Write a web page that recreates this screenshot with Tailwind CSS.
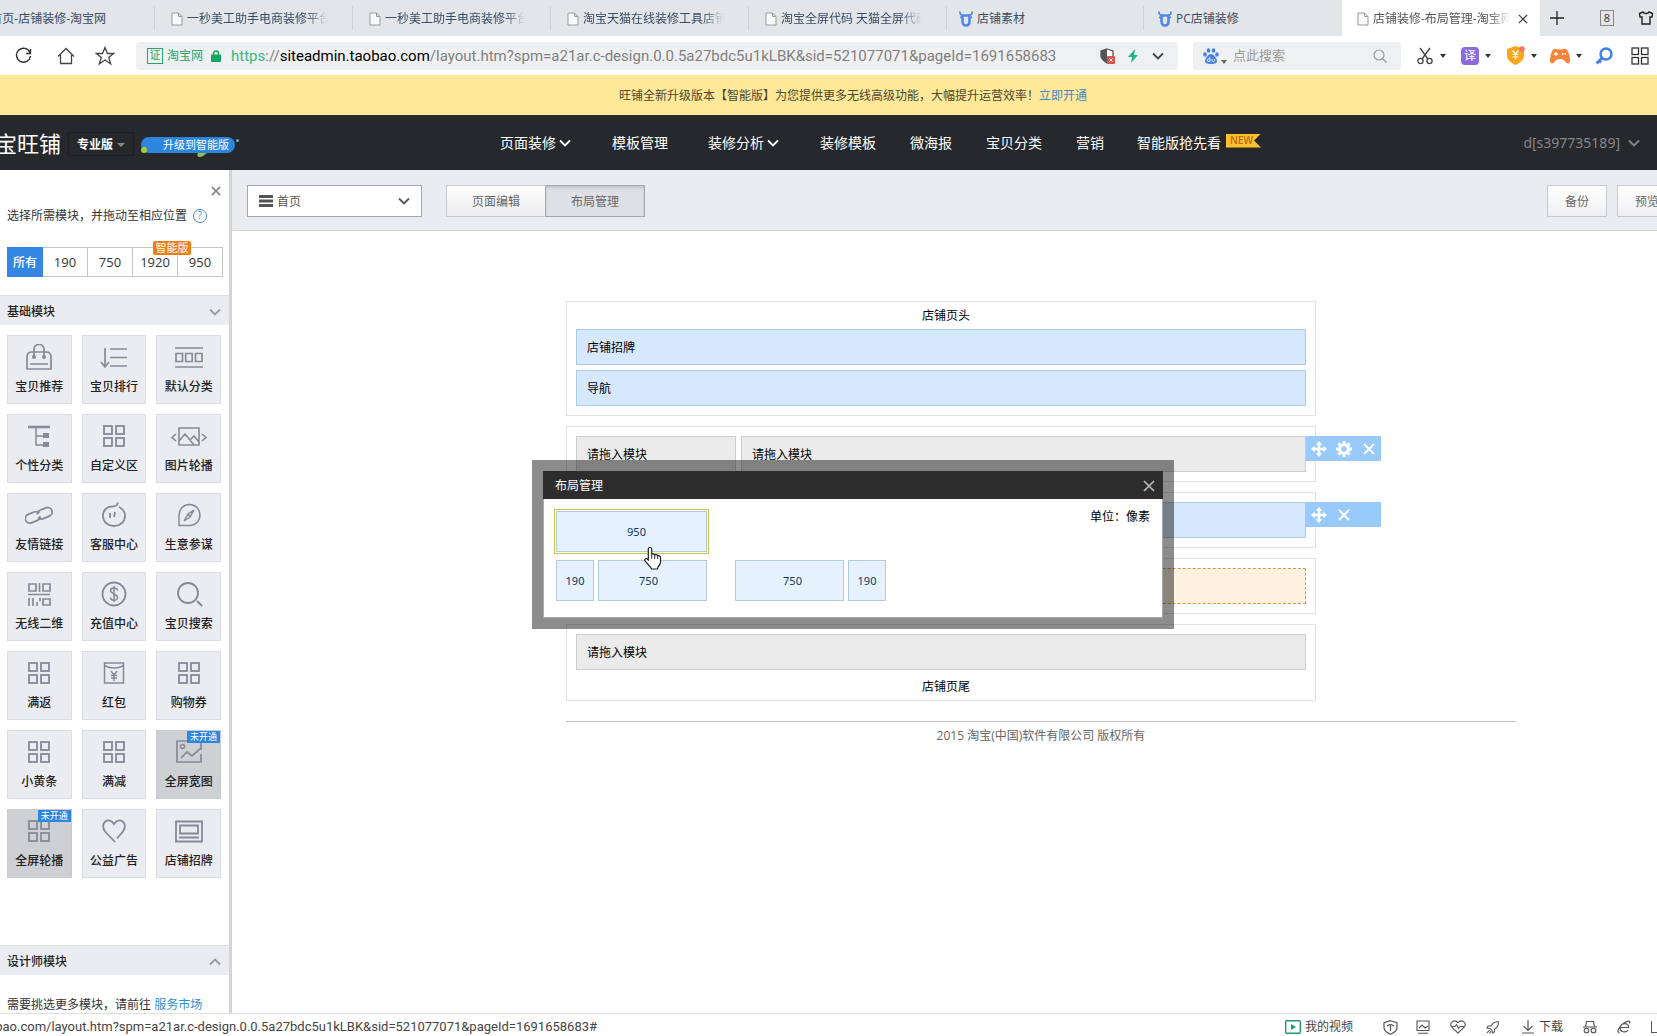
<!DOCTYPE html>
<html lang="zh-CN">
<head>
<meta charset="utf-8">
<title>店铺装修-布局管理-淘宝网</title>
<script src="https://cdn.jsdelivr.net/npm/@tailwindcss/browser@4"></script>
</head>
<body class="flex h-screen min-w-0 flex-col overflow-hidden bg-white font-['Open_Sans','Noto_Sans_CJK_SC',sans-serif] text-xs text-[#333]">

<!-- Shared icon shapes -->
<svg class="hidden" xmlns="http://www.w3.org/2000/svg">
  <symbol id="page" viewBox="0 0 12 14"><path d="M1 1h6.500L11 4.500V13H1zM7.500 1v3.500H11" fill="#fafafa" stroke="#999" /></symbol>
  <symbol id="bull" viewBox="0 0 14 16"><path d="M.8.500C.8 3 1.500 4 3.500 4M13.200.5c0 2.500-.7 3.500-2.700 3.500" fill="none" stroke="#4f86e8" stroke-width="1.600"/><path d="M3.500 4.500h7V10c0 3-1.200 4.500-3.500 4.500S3.500 13 3.500 10z" fill="none" stroke="#4f86e8" stroke-width="2.600" stroke-linejoin="round"/><path d="M1 6l2 1M13 6l-2 1" stroke="#4f86e8" stroke-width="1.500"/></symbol>
  <symbol id="down" viewBox="0 0 12 8"><path d="M1 1.500l5 5 5-5" fill="none" stroke="currentColor" stroke-width="1.800"/></symbol>
  <symbol id="caret" viewBox="0 0 6 4"><path d="M0 0h6L3 4z" fill="currentColor"/></symbol>
  <symbol id="x" viewBox="0 0 12 12"><path d="M1 1l10 10M11 1L1 11" fill="none" stroke="currentColor" stroke-width="2"/></symbol>
  <symbol id="move" viewBox="0 0 16 16"><path d="M8 0l3.200 3.700H9.300v3h3V4.800L16 8l-3.700 3.200V9.300h-3v3h1.900L8 16l-3.200-3.700h1.900v-3h-3v1.900L0 8l3.700-3.200v1.900h3v-3H4.800z" fill="#fff"/></symbol>
  <symbol id="gear" viewBox="0 0 16 16"><circle cx="8" cy="8" r="4.300" fill="none" stroke="#fff" stroke-width="3"/><path d="M8 0v4M8 12v4M0 8h4M12 8h4M2.300 2.300l2.700 2.700M11 11l2.700 2.700M2.300 13.700L5 11M11 5l2.700-2.700" stroke="#fff" stroke-width="3"/></symbol>
  <symbol id="four" viewBox="0 0 28 28"><g fill="none" stroke="#868a96" stroke-width="1.800"><rect x="4" y="3" width="8" height="8"/><rect x="16" y="3" width="8" height="8"/><rect x="4" y="15" width="8" height="8"/><rect x="16" y="15" width="8" height="8"/></g></symbol>
</svg>

<!-- Browser tabs -->
<nav class="flex h-9 shrink-0 items-center bg-[#e2e6e9] text-[#3b4a63]">
  <a href="#" class="flex h-6 w-[155px] shrink-0 items-center justify-end overflow-hidden border-r border-[#cdd2d6] pt-0.5 pr-12 whitespace-nowrap"><span>首页-店铺装修-淘宝网</span></a>
  <a href="#" class="flex h-6 w-[198px] shrink-0 items-center gap-1 border-r border-[#cdd2d6] pt-0.5 pr-6 pl-4"><svg class="h-3.5 w-3 shrink-0"><use href="#page"/></svg><span class="overflow-hidden whitespace-nowrap [mask-image:linear-gradient(to_right,#000_85%,transparent)]">一秒美工助手电商装修平台</span></a>
  <a href="#" class="flex h-6 w-[198px] shrink-0 items-center gap-1 border-r border-[#cdd2d6] pt-0.5 pr-6 pl-4"><svg class="h-3.5 w-3 shrink-0"><use href="#page"/></svg><span class="overflow-hidden whitespace-nowrap [mask-image:linear-gradient(to_right,#000_85%,transparent)]">一秒美工助手电商装修平台</span></a>
  <a href="#" class="flex h-6 w-[198px] shrink-0 items-center gap-1 border-r border-[#cdd2d6] pt-0.5 pr-6 pl-4"><svg class="h-3.5 w-3 shrink-0"><use href="#page"/></svg><span class="overflow-hidden whitespace-nowrap [mask-image:linear-gradient(to_right,#000_85%,transparent)]">淘宝天猫在线装修工具店铺</span></a>
  <a href="#" class="flex h-6 w-[198px] shrink-0 items-center gap-1 border-r border-[#cdd2d6] pt-0.5 pr-6 pl-4"><svg class="h-3.5 w-3 shrink-0"><use href="#page"/></svg><span class="overflow-hidden whitespace-nowrap [mask-image:linear-gradient(to_right,#000_85%,transparent)]">淘宝全屏代码 天猫全屏代码</span></a>
  <a href="#" class="flex h-6 w-[197px] shrink-0 items-center gap-1 border-r border-[#cdd2d6] pt-0.5 pl-3"><svg class="h-4 w-3.5 shrink-0"><use href="#bull"/></svg><span>店铺素材</span></a>
  <a href="#" class="flex h-6 w-[198px] shrink-0 items-center gap-1 pt-0.5 pl-3.5"><svg class="h-4 w-3.5 shrink-0"><use href="#bull"/></svg><span>PC店铺装修</span></a>
  <div class="flex h-9 w-[198px] shrink-0 items-center gap-1 bg-white pt-0.5 pr-3 pl-[15px] text-[#555]"><svg class="h-3.5 w-3 shrink-0"><use href="#page"/></svg><span class="flex-1 overflow-hidden whitespace-nowrap [mask-image:linear-gradient(to_right,#000_85%,transparent)]">店铺装修-布局管理-淘宝网</span>
    <button aria-label="关闭标签" class="ml-1"><svg class="size-2.5 text-[#444]" viewBox="0 0 12 12"><path d="M1 1l10 10M11 1L1 11" stroke="currentColor" stroke-width="1.500"/></svg></button></div>
  <button aria-label="新标签" class="ml-2.5 shrink-0"><svg class="size-3.5" viewBox="0 0 14 14"><path d="M7 0v14M0 7h14" stroke="#222" stroke-width="1.300"/></svg></button>
  <button class="ml-9 flex h-4 w-3.5 shrink-0 items-center justify-center border border-[#888] text-[11px] text-[#333]">8</button>
  <button aria-label="皮肤" class="ml-6 shrink-0"><svg class="size-4" viewBox="0 0 16 16"><path d="M5 2L1.500 3.500 2 7h2v7h8V7h2l.5-3.500L11 2c-1 2-5 2-6 0z" fill="none" stroke="#222" stroke-width="1.400"/></svg></button>
</nav>

<!-- Address bar -->
<div class="flex h-[39px] shrink-0 items-center bg-white">
  <button aria-label="刷新" class="ml-[15px]"><svg class="size-[17px]" viewBox="0 0 17 17"><path d="M15 5.500A7 7 0 1 0 15.500 9M15.500 2v4.500H11" fill="none" stroke="#333" stroke-width="1.400"/></svg></button>
  <button aria-label="主页" class="ml-[25px]"><svg class="size-[18px]" viewBox="0 0 18 18"><path d="M1 9.500L9 1.500l8 8M3.500 8v8.500h11V8" fill="none" stroke="#444" stroke-width="1.300"/></svg></button>
  <button aria-label="收藏" class="ml-5"><svg class="size-5" viewBox="0 0 20 20"><path d="M10 1.500l2.500 6h6.200l-5 4 2 6.500-5.700-4-5.700 4 2-6.500-5-4h6.200z" fill="none" stroke="#444" stroke-width="1.300"/></svg></button>
  <div class="ml-[21px] flex h-7 min-w-0 flex-1 items-center rounded bg-[#eff0f1] pr-3.5 pl-[11px]">
    <span class="flex size-4 shrink-0 items-center justify-center border border-[#27a56b] text-[11px] text-[#27a56b]">证</span>
    <span class="ml-1 shrink-0 text-[#27a56b]">淘宝网</span>
    <svg class="ml-2 h-3 w-2.5 shrink-0" viewBox="0 0 10 12"><path d="M2.500 5V3.500a2.500 2.500 0 0 1 5 0V5" fill="none" stroke="#14a762" stroke-width="1.500"/><rect y="4.500" width="10" height="7.500" rx="1" fill="#14a762"/></svg>
    <div role="textbox" aria-label="网址" contenteditable="true" class="ml-2.5 min-w-0 flex-1 overflow-hidden font-['Roboto',sans-serif] text-[15px] leading-6 whitespace-nowrap text-[#808080]"><span class="text-[#3ab881]">https</span>://<span class="text-black">siteadmin.taobao.com</span>/layout.htm?spm=a21ar.c-design.0.0.5a27bdc5u1kLBK&amp;sid=521077071&amp;pageId=1691658683</div>
    <svg class="size-4 shrink-0" viewBox="0 0 16 16"><path d="M7 1l6 2v5c0 3-3 5-6 7-3-2-6-4-6-7V3z" fill="#fff" stroke="#555" stroke-width="1.300"/><path d="M7 1v14c-3-2-6-4-6-7V3z" fill="#555"/><rect x="7" y="8" width="8" height="8" rx="1" fill="#d9534f"/><path d="M9.500 10.500l3 3M12.500 10.500l-3 3" stroke="#fff"/></svg>
    <svg class="ml-3 h-3.5 w-2.5 shrink-0" viewBox="0 0 10 14"><path d="M7 0L0 8h4l-1 6 7-8H6z" fill="#1cb882"/></svg>
    <svg class="ml-3.5 h-2 w-3 shrink-0 text-[#444]"><use href="#down"/></svg>
  </div>
  <div class="ml-[15px] flex h-7 w-52 shrink-0 items-center rounded bg-[#eff0f1] pr-3.5 pl-2.5">
    <svg class="size-4 shrink-0" viewBox="0 0 16 16"><g fill="#4684dc"><ellipse cx="2" cy="6.500" rx="1.800" ry="2.200"/><ellipse cx="5.500" cy="2.500" rx="1.800" ry="2.300"/><ellipse cx="10.500" cy="2.500" rx="1.800" ry="2.300"/><ellipse cx="14" cy="6.500" rx="1.800" ry="2.200"/><path d="M8 6c3 0 6 5 6 7s-1.500 3-6 3-6-1-6-3 3-7 6-7z"/></g><path d="M6.800 9v4.500H5.500a1.200 1.200 0 1 1 0-2.500h1.300M9 11v1.700c0 1 2.500 1 2.500 0V11" fill="none" stroke="#fff" stroke-width=".9"/></svg>
    <svg class="mt-3 ml-0.5 h-1 w-1.5 shrink-0 text-[#666]"><use href="#caret"/></svg>
    <input aria-label="搜索" placeholder="点此搜索" class="ml-1.5 w-full min-w-0 bg-transparent text-[13px] outline-none placeholder:text-[#999]">
    <svg class="size-3.5 shrink-0" viewBox="0 0 14 14"><circle cx="6" cy="6" r="5" fill="none" stroke="#999" stroke-width="1.200"/><path d="M9.500 9.500l4 4" stroke="#999" stroke-width="1.200"/></svg>
  </div>
  <button aria-label="截图" class="ml-[15px] flex shrink-0 items-center gap-1.5"><svg class="size-[18px]" viewBox="0 0 18 18"><path d="M4 1l8 11M14 1L6 12" stroke="#444" stroke-width="1.400"/><circle cx="4.500" cy="14" r="2.600" fill="none" stroke="#444" stroke-width="1.300"/><circle cx="13.500" cy="14" r="2.600" fill="none" stroke="#444" stroke-width="1.300"/></svg><svg class="h-1 w-1.5 text-[#333]"><use href="#caret"/></svg></button>
  <button aria-label="翻译" class="ml-[15px] flex shrink-0 items-center gap-1.5"><span class="flex size-[18px] items-center justify-center rounded-sm bg-[#8a6be0] text-white">译</span><svg class="h-1 w-1.5 text-[#333]"><use href="#caret"/></svg></button>
  <button aria-label="红包" class="ml-[15px] flex shrink-0 items-center gap-1.5"><svg class="size-[19px]" viewBox="0 0 19 19"><path d="M9.500 0l8.500 3v7c0 4-4 7-8.500 9C5 17 1 14 1 10V3z" fill="#f9a61a"/><path d="M6.500 4.500l3 3.500 3-3.500M9.500 8v6M6.500 8.500h6M6.500 11h6" fill="none" stroke="#fff" stroke-width="1.200"/><circle cx="16" cy="3" r="2.800" fill="#f37a6b"/></svg><svg class="h-1 w-1.5 text-[#333]"><use href="#caret"/></svg></button>
  <button aria-label="游戏" class="ml-[13px] flex shrink-0 items-center gap-1.5"><svg class="h-4 w-5" viewBox="0 0 20 16"><path d="M4 1c2-1 3 .5 6 .5S14 0 16 1c2.500 1 4 8 4 11.500 0 3.500-3 3.500-4.500 1.500S13 11 10 11s-4 1-5.500 3S0 16 0 12.500 1.500 2 4 1z" fill="#f6853b"/><path d="M4 6h4M6 4v4M12 6h1.500M14.500 6h1.500" stroke="#fff" stroke-width="1.300"/></svg><svg class="h-1 w-1.5 text-[#333]"><use href="#caret"/></svg></button>
  <button aria-label="密码" class="ml-[13px] shrink-0"><svg class="size-[18px]" viewBox="0 0 18 18"><circle cx="11" cy="7" r="5.500" fill="none" stroke="#3f80ea" stroke-width="2.400"/><path d="M7 11l-5.500 5.500M3.500 13l2.500 2.500" stroke="#3f80ea" stroke-width="2.800"/></svg></button>
  <button aria-label="扩展" class="mr-2 ml-[18px] shrink-0"><svg class="size-[18px]" viewBox="0 0 18 18"><g fill="none" stroke="#333" stroke-width="1.300"><rect x="1" y="1" width="6.500" height="6.500"/><rect x="10.500" y="1" width="6.500" height="6.500"/><rect x="1" y="10.500" width="6.500" height="6.500"/><rect x="10.500" y="10.500" width="6.500" height="6.500"/></g></svg></button>
</div>

<!-- Upgrade notice -->
<div class="flex h-10 shrink-0 items-center justify-center bg-[#fee999] pt-0.5 pl-[49px] text-[#4d4630]">旺铺全新升级版本【智能版】为您提供更多无线高级功能，大幅提升运营效率！<a href="#" class="text-[#4a86c5]">立即开通</a></div>

<!-- Product header -->
<header class="flex h-[55px] shrink-0 items-center bg-[#26282c] text-sm text-white">
  <div class="flex w-[61px] shrink-0 justify-end overflow-hidden text-[22px] leading-8 whitespace-nowrap"><span>淘宝旺铺</span></div>
  <button class="mt-0.5 ml-[7px] flex h-6 w-[66px] shrink-0 items-center justify-center gap-1 rounded-xs border border-[#1d1f22] pt-0.5 text-xs font-bold">专业版<svg class="h-1.5 w-2 text-[#888]" viewBox="0 0 8 6"><path d="M0 1h8L4 5z" fill="currentColor"/></svg></button>
  <a href="#" class="relative mt-1 ml-[7px] flex h-4 w-[94px] shrink-0 items-center justify-end rounded-full bg-[#2c86de] pr-1.5 text-[11px] whitespace-nowrap">升级到智能版
    <span class="absolute bottom-0 left-0 size-1.5 rounded-full bg-[#a4cf3a]"></span><span class="absolute top-0.5 -right-1 size-[3px] rounded-full bg-[#6fa5dc]"></span>
    <svg class="absolute top-4 left-14 h-1 w-2.5" viewBox="0 0 10 4"><path d="M1 0h9c-2 1-4 4-7 4S0 2 1 0z" fill="#93ba5d"/></svg></a>
  <nav class="ml-[265px] flex shrink-0 items-center whitespace-nowrap">
    <a href="#" class="mr-[41px] flex items-center gap-[3px]">页面装修<svg class="h-2 w-3"><use href="#down"/></svg></a>
    <a href="#" class="mr-10">模板管理</a>
    <a href="#" class="mr-[41px] flex items-center gap-[3px]">装修分析<svg class="h-2 w-3"><use href="#down"/></svg></a>
    <a href="#" class="mr-[34px]">装修模板</a>
    <a href="#" class="mr-[34px]">微海报</a>
    <a href="#" class="mr-[34px]">宝贝分类</a>
    <a href="#" class="mr-[33px]">营销</a>
    <a href="#" class="flex items-center gap-[5px]">智能版抢先看<span class="mb-1 flex h-3.5 w-[35px] items-center bg-[#fbc22d] pl-1 text-[10px] font-semibold text-[#c0661a] [clip-path:polygon(0_0,100%_0,80%_50%,100%_100%,0_100%)]">NEW</span></a>
  </nav>
  <button class="mr-[17px] ml-auto flex items-center gap-2 font-['Noto_Sans',sans-serif] text-[#85878c]">d[s397735189]<svg class="h-2 w-3"><use href="#down"/></svg></button>
</header>

<div class="flex min-h-0 flex-1">
  <!-- Module panel -->
  <aside class="flex w-[232px] shrink-0 flex-col border-r-[3px] border-[#d2d3d6] bg-white">
    <div class="flex h-9 shrink-0 items-center justify-end pt-1.5 pr-2"><button aria-label="关闭"><svg class="size-2.5 text-[#888]" viewBox="0 0 12 12"><path d="M1 1l10 10M11 1L1 11" stroke="currentColor" stroke-width="2"/></svg></button></div>
    <div class="flex h-5 shrink-0 items-center gap-1.5 pl-[7px] whitespace-nowrap">选择所需模块，并拖动至相应位置<span class="flex size-3.5 items-center justify-center rounded-full border border-[#4a87d0] text-[10px] text-[#4a87d0]">?</span></div>
    <div class="relative mt-[21px] mr-1.5 ml-[7px] grid h-[30px] shrink-0 grid-cols-[36px_1fr_1fr_1fr_1fr] text-[13px]">
      <button class="bg-[#3387e2] pt-0.5 text-xs font-medium text-white">所有</button>
      <button class="border-y border-r border-[#c3c5c9] pt-0.5">190</button>
      <button class="border-y border-r border-[#c3c5c9] pt-0.5">750</button>
      <button class="border-y border-r border-[#c3c5c9] pt-0.5">1920</button>
      <button class="border-y border-r border-[#c3c5c9] pt-0.5">950</button>
      <span class="absolute -top-1.5 left-[146px] flex h-3.5 w-[38px] items-center justify-center rounded-xs bg-[#ee7d14] text-[11px] text-white">智能版</span>
    </div>
    <button class="mt-[18px] flex h-[30px] shrink-0 items-center justify-between border-t border-[#dddfe3] bg-[#ebecf2] pt-0.5 pr-2 pl-[7px] font-medium text-[#222]">基础模块<svg class="h-2 w-3 text-[#999]"><use href="#down"/></svg></button>
    <div class="mt-2.5 grid shrink-0 grid-cols-3 gap-2.5 pr-2 pl-[7px] font-medium text-[#222]">
      <button class="flex h-[69px] flex-col items-center gap-[7px] border border-[#dcdde3] bg-[#ebecf2] pt-2"><svg class="size-7" viewBox="0 0 28 28"><g fill="none" stroke="#868a96" stroke-width="1.700"><path d="M2 25V13c0-3 2-5 5-5h14c3 0 5 2 5 5v12zM9 13V5c0-6 10-6 10 0v8M5 20h18"/></g><circle cx="9" cy="13" r="2" fill="#868a96"/><circle cx="19" cy="13" r="2" fill="#868a96"/></svg>宝贝推荐</button>
      <button class="flex h-[69px] flex-col items-center gap-[7px] border border-[#dcdde3] bg-[#ebecf2] pt-2"><svg class="size-7" viewBox="0 0 28 28"><path d="M5 4v19M1 18l4 5 4-5M10 5h17M10 13.500h17M10 22h17" fill="none" stroke="#868a96" stroke-width="1.700"/></svg>宝贝排行</button>
      <button class="flex h-[69px] flex-col items-center gap-[7px] border border-[#dcdde3] bg-[#ebecf2] pt-2"><svg class="size-7" viewBox="0 0 28 28"><path d="M0 4h28M0 23h28M1 9.500h6.500v8H1zM10.700 9.500h6.500v8h-6.500zM20.500 9.500H27v8h-6.500z" fill="none" stroke="#868a96" stroke-width="1.700"/></svg>默认分类</button>

      <button class="flex h-[69px] flex-col items-center gap-[7px] border border-[#dcdde3] bg-[#ebecf2] pt-2"><svg class="size-7" viewBox="0 0 28 28"><path d="M3 4h22" stroke="#868a96" stroke-width="2.600"/><path d="M11 4v18h8M11 13h8" fill="none" stroke="#868a96" stroke-width="1.500"/><path d="M18 10h6v5h-6zM18 19h6v5h-6z" fill="#868a96"/></svg>个性分类</button>
      <button class="flex h-[69px] flex-col items-center gap-[7px] border border-[#dcdde3] bg-[#ebecf2] pt-2"><svg class="size-7"><use href="#four"/></svg>自定义区</button>
      <button class="flex h-[69px] flex-col items-center gap-[7px] border border-[#dcdde3] bg-[#ebecf2] pt-2"><svg class="h-7 w-9" viewBox="0 0 36 28"><path d="M8 5h20v17H8zM8 18l6-7 9 11M19 17l4-4 5 6M5 11l-4 3.500L5 18M31 11l4 3.500-4 3.500" fill="none" stroke="#868a96" stroke-width="1.600"/></svg>图片轮播</button>

      <button class="flex h-[69px] flex-col items-center gap-[7px] border border-[#dcdde3] bg-[#ebecf2] pt-2"><svg class="size-7" viewBox="0 0 28 28"><g fill="none" stroke="#868a96" stroke-width="1.800" transform="rotate(-22 14 14)"><path d="M15 14.500c-1 2-2 3-4 3H4.500a4.500 4.500 0 0 1 0-9H11c2 0 3.500 1 4.300 3"/><path d="M13 12c1-2 2-3 4-3h6.500a4.500 4.500 0 0 1 0 9H17c-2 0-3.500-1-4.300-3"/></g></svg>友情链接</button>
      <button class="flex h-[69px] flex-col items-center gap-[7px] border border-[#dcdde3] bg-[#ebecf2] pt-2"><svg class="size-7" viewBox="0 0 28 28"><path d="M19 5c4 2 6 5 6 9 0 6-5 10-11 10S3 20 3 14C3 8 7 4.500 12 4.500c4 0 5-1 6-4M10 11v5M15 10l-1 5" fill="none" stroke="#868a96" stroke-width="1.800"/></svg>客服中心</button>
      <button class="flex h-[69px] flex-col items-center gap-[7px] border border-[#dcdde3] bg-[#ebecf2] pt-2"><svg class="size-7" viewBox="0 0 28 28"><path d="M4 23.500V13A10.500 10.500 0 1 1 14.500 23.500zM19 8l-6 4-4 7 6-4zM13 12l2.500 3" fill="none" stroke="#868a96" stroke-width="1.500"/></svg>生意参谋</button>

      <button class="flex h-[69px] flex-col items-center gap-[7px] border border-[#dcdde3] bg-[#ebecf2] pt-2"><svg class="size-7" viewBox="0 0 28 28"><path d="M4 3h7v7H4zM18 3h7v7h-7zM14.500 2v9M3 13.500h22M4 17v8M8 17v8M12 21v4M15 17v3M18 18h7v6h-7z" fill="none" stroke="#868a96" stroke-width="1.700"/></svg>无线二维</button>
      <button class="flex h-[69px] flex-col items-center gap-[7px] border border-[#dcdde3] bg-[#ebecf2] pt-2"><svg class="size-7" viewBox="0 0 28 28"><g fill="none" stroke="#868a96"><circle cx="14" cy="13" r="11.500" stroke-width="1.800"/><path d="M14 5v16M17.500 9.500c0-3.500-7-3.500-7 0s7 3 7 7-7 3.500-7 0" stroke-width="1.500"/></g></svg>充值中心</button>
      <button class="flex h-[69px] flex-col items-center gap-[7px] border border-[#dcdde3] bg-[#ebecf2] pt-2"><svg class="size-7" viewBox="0 0 28 28"><circle cx="13" cy="12" r="10" fill="none" stroke="#868a96" stroke-width="1.800"/><path d="M22 20l5 5" stroke="#868a96" stroke-width="2"/></svg>宝贝搜索</button>

      <button class="flex h-[69px] flex-col items-center gap-[7px] border border-[#dcdde3] bg-[#ebecf2] pt-2"><svg class="size-7"><use href="#four"/></svg>满返</button>
      <button class="flex h-[69px] flex-col items-center gap-[7px] border border-[#dcdde3] bg-[#ebecf2] pt-2"><svg class="size-7" viewBox="0 0 28 28"><path d="M4.500 3h19v20h-19zM4.500 5c4 4 15 4 19 0M11 11l3 4 3-4M14 15v6M11 15.500h6M11 18h6" fill="none" stroke="#868a96" stroke-width="1.500"/></svg>红包</button>
      <button class="flex h-[69px] flex-col items-center gap-[7px] border border-[#dcdde3] bg-[#ebecf2] pt-2"><svg class="size-7"><use href="#four"/></svg>购物券</button>

      <button class="flex h-[69px] flex-col items-center gap-[7px] border border-[#dcdde3] bg-[#ebecf2] pt-2"><svg class="size-7"><use href="#four"/></svg>小黄条</button>
      <button class="flex h-[69px] flex-col items-center gap-[7px] border border-[#dcdde3] bg-[#ebecf2] pt-2"><svg class="size-7"><use href="#four"/></svg>满减</button>
      <button class="relative flex h-[69px] flex-col items-center gap-[7px] border border-[#c9cace] bg-[#cfd0d4] pt-2"><svg class="size-7" viewBox="0 0 28 28"><path d="M26 15v8H2V2h24v9M6 19l6-6 5 4 9-8" fill="none" stroke="#868a96" stroke-width="1.700"/><circle cx="7.500" cy="7.500" r="2" fill="none" stroke="#868a96" stroke-width="1.500"/></svg>全屏宽图<span class="absolute top-0 right-0 flex h-3 w-[33px] items-center justify-center bg-[#2f86e0] text-[9px] font-normal text-white">未开通</span></button>

      <button class="relative flex h-[69px] flex-col items-center gap-[7px] border border-[#c9cace] bg-[#cfd0d4] pt-2"><svg class="size-7"><use href="#four"/></svg>全屏轮播<span class="absolute top-0 right-0 flex h-3 w-[33px] items-center justify-center bg-[#2f86e0] text-[9px] font-normal text-white">未开通</span></button>
      <button class="flex h-[69px] flex-col items-center gap-[7px] border border-[#dcdde3] bg-[#ebecf2] pt-2"><svg class="size-7" viewBox="0 0 28 28"><path d="M15 24L5 13.500C-1 5 9-2 14 6c5-8 15-1 9 7.500l-6 7" fill="none" stroke="#868a96" stroke-width="1.800"/></svg>公益广告</button>
      <button class="flex h-[69px] flex-col items-center gap-[7px] border border-[#dcdde3] bg-[#ebecf2] pt-2"><svg class="size-7" viewBox="0 0 28 28"><path d="M1 3.500h26v20H1zM5 7.500h18v8H5zM4 19.500h20" fill="none" stroke="#868a96" stroke-width="1.800"/></svg>店铺招牌</button>
    </div>
    <button class="mt-auto flex h-[30px] shrink-0 items-center justify-between border-t border-[#dddfe3] bg-[#ebecf2] pt-0.5 pr-2 pl-[7px] font-medium text-[#222]">设计师模块<svg class="h-2 w-3 rotate-180 text-[#999]"><use href="#down"/></svg></button>
    <p class="h-[38px] shrink-0 pt-[22px] pl-[7px] leading-4 whitespace-nowrap">需要挑选更多模块，请前往 <a href="#" class="text-[#2f8fd0]">服务市场</a></p>
  </aside>

  <main class="flex min-w-0 flex-1 flex-col overflow-hidden">
    <!-- Page toolbar -->
    <div class="flex h-[61px] shrink-0 items-center border-b border-[#d5d6da] bg-[#ebecf2] pt-0.5 pl-[15px] text-[#666]">
      <div class="relative h-8 w-[175px] shrink-0">
        <select aria-label="页面" class="h-8 w-full appearance-none border border-[#a5a7ab] bg-white pt-px pl-[29px] text-xs text-[#555]"><option>首页</option></select>
        <svg class="pointer-events-none absolute top-2.5 left-3 h-3 w-3.5" viewBox="0 0 14 12"><path d="M0 1.500h14M0 6h14M0 10.500h14" stroke="#555" stroke-width="3"/></svg>
        <svg class="pointer-events-none absolute top-3 right-3 h-2 w-3 text-[#555]"><use href="#down"/></svg>
      </div>
      <div class="ml-6 flex shrink-0">
        <button class="h-8 w-[99px] border border-r-0 border-[#c8c9cc] bg-linear-to-b from-white to-[#ececee] pt-px">页面编辑</button>
        <button class="h-8 w-[100px] border border-[#a5a7ab] bg-[#dfe0e5] pt-px shadow-[inset_0_2px_3px_#c4c5ca]">布局管理</button>
      </div>
      <div class="ml-auto flex shrink-0 gap-2.5 overflow-hidden">
        <button class="h-8 w-[60px] shrink-0 border border-[#c8c9cc] bg-linear-to-b from-white to-[#f0f0f2] pt-px">备份</button>
        <button class="h-8 w-10 shrink-0 overflow-hidden border border-r-0 border-[#c8c9cc] bg-linear-to-b from-white to-[#f0f0f2] pt-px pl-[17px] text-left whitespace-nowrap">预览</button>
      </div>
    </div>

    <!-- Layout canvas -->
    <div class="relative flex-1 pt-[70px] pl-[334px] text-black">
      <div class="flex w-[750px] flex-col gap-2.5">
        <section class="flex flex-col gap-[5px] border border-[#e2e2e2] px-[9px] pb-[9px]">
          <h2 class="-mb-[5px] pt-1.5 pb-[5px] pl-2.5 text-center leading-4">店铺页头</h2>
          <div class="flex h-9 items-center border border-[#a9cbe3] bg-[#d6e8fe] pt-0.5 pl-2.5">店铺招牌</div>
          <div class="flex h-9 items-center border border-[#a9cbe3] bg-[#d6e8fe] pt-0.5 pl-2.5">导航</div>
        </section>
        <section class="relative flex gap-[5px] border border-[#e2e2e2] p-[9px]">
          <div class="flex h-9 w-40 items-center border border-[#cdcdcd] bg-[#ebebeb] pt-0.5 pl-2.5">请拖入模块</div>
          <div class="flex h-9 flex-1 items-center border border-[#cdcdcd] bg-[#ebebeb] pt-0.5 pl-2.5">请拖入模块</div>
          <div class="absolute top-[9px] left-[739px] flex h-[25px] w-[75px] items-center gap-[9px] bg-[#99cafd] pl-[5px] text-white">
            <button aria-label="移动"><svg class="size-4"><use href="#move"/></svg></button><button aria-label="设置"><svg class="size-4"><use href="#gear"/></svg></button><button aria-label="删除" class="pl-0.5"><svg class="size-3"><use href="#x"/></svg></button>
          </div>
        </section>
        <section class="relative border border-[#e2e2e2] p-[9px]">
          <div class="h-9 border border-[#a9cbe3] bg-[#d6e8fe]"></div>
          <div class="absolute top-[9px] left-[739px] flex h-[25px] w-[75px] items-center gap-[9px] bg-[#99cafd] pl-[5px] text-white">
            <button aria-label="移动"><svg class="size-4"><use href="#move"/></svg></button><button aria-label="删除" class="pl-0.5"><svg class="size-3"><use href="#x"/></svg></button>
          </div>
        </section>
        <section class="border border-[#e2e2e2] p-[9px]">
          <div class="h-9 border border-dashed border-[#d59a4b] bg-[#fef1df]"></div>
        </section>
        <section class="border border-[#e2e2e2] px-[9px] pt-[9px]">
          <div class="flex h-9 items-center border border-[#cdcdcd] bg-[#ebebeb] pt-0.5 pl-2.5">请拖入模块</div>
          <h2 class="pt-[9px] pb-[5px] pl-2.5 text-center leading-4">店铺页尾</h2>
        </section>
      </div>
      <footer class="mt-5 w-[950px] border-t border-[#bbb] pt-1.5 text-center leading-4 text-[#666]">2015 淘宝(中国)软件有限公司 版权所有</footer>

      <!-- Layout picker dialog -->
      <div role="dialog" aria-label="布局管理" class="absolute top-[229px] left-[300px] w-[642px] bg-black/45 p-[11px]">
        <div class="flex h-7 items-center justify-between bg-[#2d2d2d] pt-0.5 pr-2 pl-3 text-white"><h3>布局管理</h3><button aria-label="关闭" class="text-[#bbb]"><svg class="size-3" viewBox="0 0 12 12"><path d="M1 1l10 10M11 1L1 11" stroke="currentColor" stroke-width="1.600"/></svg></button></div>
        <div class="flex h-[119px] justify-between border border-t-0 border-[#aaa] bg-white pt-2.5 pr-3 pl-2.5">
          <div class="flex flex-col gap-1.5 font-['Noto_Sans',sans-serif] text-[11px] text-[#0b3a60]">
            <button class="h-[45px] w-[155px] border border-[#d3c04a] p-px"><span class="flex h-full items-center justify-center border border-[#b4cbd6] bg-[#e6f1fe] pt-0.5 pl-2.5">950</span></button>
            <div class="flex gap-7 pl-0.5">
              <div class="flex gap-1"><button class="h-[41px] w-[38px] border border-[#b4cbd6] bg-[#e6f1fe] pt-0.5">190</button><button class="h-[41px] w-[109px] border border-[#b4cbd6] bg-[#e6f1fe] pt-0.5 pr-2">750</button></div>
              <div class="flex gap-1"><button class="h-[41px] w-[109px] border border-[#b4cbd6] bg-[#e6f1fe] pt-0.5 pl-1.5">750</button><button class="h-[41px] w-[38px] border border-[#b4cbd6] bg-[#e6f1fe] pt-0.5">190</button></div>
            </div>
          </div>
          <p class="leading-4">单位：像素</p>
        </div>
        <!-- Hand pointer -->
        <svg class="absolute top-[86px] left-[111px] h-6 w-5" viewBox="0 0 20 24"><path d="M7 1.500c1 0 1.700.7 1.700 1.700v5.300c.5-1 2.700-1 3 .6.700-.9 2.600-.6 2.900.9 1-.7 2.900-.2 2.900 1.500v4.500c0 2-1.500 4-2.500 5l-.5 2H8.500l-1-2L2 15c-1-1.500.5-3 2-2.200l1.300 1.200V3.200c0-1 .7-1.700 1.700-1.700z" fill="#fff" stroke="#222" stroke-width="1.200"/><path d="M8.700 8.500v4M11.700 9.500V13M14.600 10.500V13" stroke="#222"/></svg>
      </div>
    </div>
  </main>
</div>

<!-- Browser status bar -->
<footer class="flex h-[23px] shrink-0 items-center border-t border-[#e0e0e0] bg-white pt-1 text-[#444]">
  <div class="flex w-[597px] shrink-0 justify-end overflow-hidden font-['Roboto',sans-serif] text-[13px] leading-4 whitespace-nowrap"><span>https://siteadmin.taobao.com/layout.htm?spm=a21ar.c-design.0.0.5a27bdc5u1kLBK&amp;sid=521077071&amp;pageId=1691658683#</span></div>
  <div class="ml-auto flex shrink-0 items-center whitespace-nowrap">
    <a href="#" class="mr-[30px] flex items-center gap-1"><svg class="h-3.5 w-4" viewBox="0 0 16 14"><rect x=".7" y=".7" width="14.600" height="12.600" rx="1" fill="none" stroke="#1f9d6a" stroke-width="1.400"/><path d="M6 4l5 3-5 3z" fill="#1f9d6a"/></svg>我的视频</a>
    <button aria-label="安全" class="mr-[18px]"><svg class="size-[15px]" viewBox="0 0 15 15"><path d="M7.500.7l6.500 2v5c0 3-3 5-6.500 6.600C4 12.700 1 10.700 1 7.700v-5zM4 6c2-2 5-2 7 0M7.500 5v6" fill="none" stroke="#555" stroke-width="1.200"/></svg></button>
    <button aria-label="图片" class="mr-5"><svg class="size-3.5" viewBox="0 0 14 14"><path d="M1 1h12v9.500H1zM2 13.300h10M3 8l3-3 3 3 3-2" fill="none" stroke="#555" stroke-width="1.100"/></svg></button>
    <button aria-label="健康" class="mr-5"><svg class="h-3.5 w-4" viewBox="0 0 16 14"><path d="M8 13L2 7.500C-1.500 3 4-1.500 8 2.500c4-4 9.500.5 6 5zM2 6.500h3l1.500-2 2 4 1.500-2h4" fill="none" stroke="#555" stroke-width="1.100"/></svg></button>
    <button aria-label="加速" class="mr-[22px]"><svg class="size-[13px]" viewBox="0 0 13 13"><path d="M12.300.7C9 .5 6.500 2 5 5L2 5 1 7l3 .5L6 9l.5 3 2-1V8c3-1.500 4.300-4 3.800-7.300zM3.500 9L1 12M5 10l-1.500 2.500" fill="none" stroke="#555" stroke-width="1.100"/></svg></button>
    <a href="#" class="mr-5 flex items-center gap-1"><svg class="size-3.5" viewBox="0 0 14 14"><path d="M7 0v10M2.500 6L7 10.500 11.500 6M1 13h12" fill="none" stroke="#555" stroke-width="1.200"/></svg>下载</a>
    <button aria-label="无痕" class="mr-5"><svg class="size-3.5" viewBox="0 0 14 14"><path d="M0 7h14M2.500 7l1-5.500h7l1 5.500" fill="none" stroke="#555" stroke-width="1.200"/><circle cx="3.500" cy="10.500" r="2.300" fill="none" stroke="#555" stroke-width="1.100"/><circle cx="10.500" cy="10.500" r="2.300" fill="none" stroke="#555" stroke-width="1.100"/></svg></button>
    <button aria-label="兼容模式" class="mr-5"><svg class="size-3.5" viewBox="0 0 14 14"><path d="M4 7.500h7.500c.5-5-7-5.500-8.300 0-.8 5 6 5.500 7.800 2.500M2.500 12.500C-1 13 2 6 7 3c4-2.500 6.500-2.500 5.500.5" fill="none" stroke="#555" stroke-width="1.200"/></svg></button>
    <span class="h-3 w-1.5 border-b border-l border-[#555]"></span>
  </div>
</footer>
</body>
</html>
